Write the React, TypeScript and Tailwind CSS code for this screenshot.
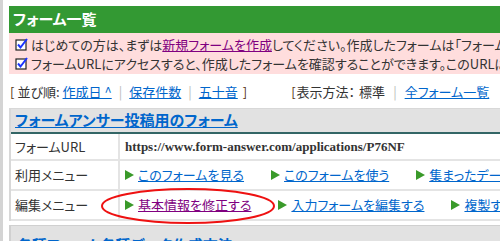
import React from "react";

// チェックアイコン
function CheckIcon() {
  return (
    <svg width="13" height="13" viewBox="0 0 13 13" className="shrink-0">
      <rect x="1" y="2" width="10" height="10" fill="white" stroke="#222" strokeWidth="1.2" />
      <path d="M3 6.5 L5.5 9.5 L12 1" fill="none" stroke="#1a33ff" strokeWidth="2" />
    </svg>
  );
}

function Arrow() {
  return (
    <svg width="9" height="10" viewBox="0 0 9 10" className="shrink-0">
      <path d="M0 0 L9 5 L0 10 Z" fill="#3a9a2a" />
    </svg>
  );
}

function MenuLink({ label, visited }: { label: string; visited?: boolean }) {
  return (
    <span className="flex items-center gap-[4px]">
      <Arrow />
      <a
        href="#"
        className={
          visited
            ? "text-[#800080] underline whitespace-nowrap"
            : "text-[#0066cc] underline whitespace-nowrap"
        }
      >
        {label}
      </a>
    </span>
  );
}

export default function App() {
  const jp = { fontFamily: '"Noto Sans CJK JP", "Noto Sans", sans-serif' };

  return (
    <div
      className="w-[500px] h-[241px] overflow-hidden bg-white border-l-[3px] border-[#d4d4d4] pl-[6px] pt-[6px] text-[13px] text-[#333] [font-feature-settings:'palt']"
      style={jp}
    >
      {/* 見出し */}
      <div className="bg-[#339933] h-[27px] flex items-center pl-[4px] text-white font-bold text-[15px] whitespace-nowrap">
        フォーム一覧
      </div>
      <div className="bg-[#ffdddd] pt-[2px] pb-[1px] pl-[6px] whitespace-nowrap overflow-hidden">
        <div className="flex items-center gap-[3px] h-[19px]">
          <CheckIcon />
          <span>
            はじめての方は、まずは
            <a href="#" className="text-[#800080] underline">新規フォームを作成</a>
            してください。作成したフォームは「フォーム一覧」に表示されます。
          </span>
        </div>
        <div className="flex items-center gap-[3px] h-[19px]">
          <CheckIcon />
          <span>フォームURLにアクセスすると、作成したフォームを確認することができます。このURLにリンクしてください。</span>
        </div>
      </div>

      {/* 並び順 */}
      <div className="flex items-center h-[34px] whitespace-nowrap pt-[2px]">
        <span className="pl-[1px] text-[#553311]">[</span>
        <span className="ml-[3px]">並び順:</span>
        <a href="#" className="ml-[3px] text-[#0066cc] underline">作成日 ^</a>
        <span className="mx-[7px] text-[#bbbbbb]">|</span>
        <a href="#" className="text-[#0066cc] underline">保存件数</a>
        <span className="mx-[7px] text-[#bbbbbb]">|</span>
        <a href="#" className="text-[#0066cc] underline">五十音</a>
        <span className="ml-[5px] text-[#553311]">]</span>
        <span className="ml-[44px] text-[#553311]">[</span>
        <span className="ml-[1px]">表示方法：</span>
        <span className="ml-[4px]">標準</span>
        <span className="mx-[8px] text-[#bbbbbb]">|</span>
        <a href="#" className="text-[#0066cc] underline">全フォーム一覧</a>
      </div>

      {/* フォーム表 */}
      <div className="border-l-[2px] border-t border-[#d8d8d8]">
        <div className="bg-[#e2e2e2] h-[25px] flex items-end pl-[4px] pb-[1px] border-b-[2px] border-[#336666]">
          <a href="#" className="text-[#0066cc] underline font-bold text-[15px] whitespace-nowrap">
            フォームアンサー投稿用のフォーム
          </a>
        </div>
        <div className="flex h-[27px] border-b-[2px] border-[#e4e4e4]">
          <div className="w-[109px] flex items-center pl-[4px] border-r-[2px] border-[#e4e4e4]">フォームURL</div>
          <div
            className="flex-1 flex items-center pl-[5px] font-bold text-[13px] text-[#333] whitespace-nowrap"
            style={{ fontFamily: '"Liberation Serif", serif' }}
          >
            https://www.form-answer.com/applications/P76NF
          </div>
        </div>
        <div className="flex h-[30px] border-b-[2px] border-[#e4e4e4]">
          <div className="w-[109px] flex items-center pl-[4px] border-r-[2px] border-[#e4e4e4]">利用メニュー</div>
          <div className="flex-1 flex items-center pl-[5px] gap-[27px] whitespace-nowrap overflow-hidden">
            <MenuLink label="このフォームを見る" />
            <MenuLink label="このフォームを使う" />
            <MenuLink label="集まったデータを見る" />
          </div>
        </div>
        <div className="relative flex h-[30px] border-b-[2px] border-[#e4e4e4]">
          <div className="w-[109px] flex items-center pl-[4px] border-r-[2px] border-[#e4e4e4]">編集メニュー</div>
          <div className="flex-1 flex items-center pl-[5px] gap-[27px] whitespace-nowrap overflow-hidden">
            <MenuLink label="基本情報を修正する" visited />
            <MenuLink label="入力フォームを編集する" />
            <MenuLink label="複製する" />
          </div>
          {/* 赤丸 */}
          <svg className="absolute left-[88px] top-[-5px] pointer-events-none" width="180" height="40" viewBox="0 0 180 40">
            <ellipse cx="89" cy="20" rx="86" ry="17" fill="none" stroke="#ee1111" strokeWidth="2" />
          </svg>
        </div>
      </div>

      {/* 次のフォーム */}
      <div className="mt-[4px] border-l-[2px] border-t border-[#d0d0d0] bg-[#e2e2e2] h-[30px] pl-[6px] pt-[8px]">
        <a href="#" className="text-[#0066cc] underline font-bold text-[15px] whitespace-nowrap">
          各種フォーム各種データ作成方法
        </a>
      </div>
    </div>
  );
}
